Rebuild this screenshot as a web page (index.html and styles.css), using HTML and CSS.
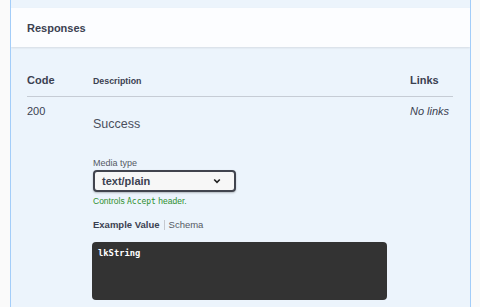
FILE: index.html
```html
<!DOCTYPE html>
<html>
<head>
<meta charset="utf-8">
<link rel="stylesheet" href="styles.css">
</head>
<body>
<div class="page">
  <div class="opblock">
    <div class="section-header"><h4>Responses</h4></div>
    <div class="responses-inner">
      <div class="table">
        <div class="th th-code">Code</div>
        <div class="th th-desc">Description</div>
        <div class="th th-links">Links</div>

        <div class="td td-code">200</div>
        <div class="td td-desc">
          <p class="markdown">Success</p>
          <div class="media">
            <div class="media-label">Media type</div>
            <div class="select">
              <span class="select-text">text/plain</span>
              <svg class="chev" width="8" height="6" viewBox="0 0 8 6"><polyline points="1.2,1.5 4,4.3 6.8,1.5" fill="none" stroke="#222" stroke-width="1.6"/></svg>
            </div>
            <div class="accept">Controls <code>Accept</code> header.</div>
          </div>
          <div class="tabs">
            <span class="tab active">Example Value</span><span class="tab sep">Schema</span>
          </div>
          <pre class="example">lkString</pre>
        </div>
        <div class="td td-links">No links</div>
      </div>
    </div>
  </div>
</div>
</body>
</html>
```
FILE: styles.css
```css
html, body {
  margin: 0;
  padding: 0;
  background: #fafafa;
  height: 307px;
  overflow: hidden;
}
body {
  font-family: "Liberation Sans", Arial, sans-serif;
  color: #3b4151;
}
.page {
  padding: 0 9px 0 10px;
}
.opblock {
  border-left: 1px solid #a3cdf9;
  border-right: 1px solid #a3cdf9;
  background: #ecf4fc;
  padding-top: 8px;
  height: 299px;
  overflow: hidden;
}
.section-header {
  height: 39px;
  display: flex;
  align-items: center;
  padding: 0 16px;
  background: rgba(255,255,255,0.82);
  box-shadow: 0 1px 2px rgba(0,0,0,0.1);
}
.section-header h4 {
  margin: 0;
  font-size: 11px;
  font-weight: 700;
  color: #3b4151;
}
.responses-inner {
  padding: 17px 17px 0 16px;
}
.table {
  display: grid;
  grid-template-columns: 66px 1fr 43px;
}
.th {
  padding: 8px 0;
  line-height: 16px;
  font-weight: 700;
  border-bottom: 1px solid #c6ccd5;
  align-self: end;
}
.th-code, .th-links {
  font-size: 11px;
}
.th-desc {
  font-size: 8.8px;
  line-height: 14px;
  padding-bottom: 8.5px;
}
.td {
  padding-top: 6px;
}
.td-code {
  font-size: 11px;
  line-height: 16px;
}
.td-links {
  font-size: 11px;
  line-height: 16px;
  font-style: italic;
  color: #3b4151;
}
.markdown {
  margin: 12px 0 0;
  font-size: 12.5px;
  line-height: 18px;
  color: #4a4f5c;
}
.media {
  margin-top: 24px;
}
.media-label {
  font-size: 9px;
  line-height: 12px;
  color: #555a64;
}
.select {
  margin-top: 1px;
  width: 143px;
  height: 22px;
  box-sizing: border-box;
  border: 2px solid #41444e;
  border-radius: 4px;
  background: #f7f7f7;
  box-shadow: 0 1px 2px rgba(0,0,0,0.25);
  display: flex;
  align-items: center;
  justify-content: space-between;
  padding: 0 13px 0 7px;
}
.select-text {
  font-size: 11px;
  font-weight: 700;
  color: #3b4151;
}
.chev {
  display: block;
}
.accept {
  margin-top: 4px;
  font-size: 8.5px;
  line-height: 11px;
  color: #2f8f2f;
}
.accept code {
  font-family: "DejaVu Sans Mono", "Liberation Mono", monospace;
  font-size: 8px;
}
.tabs {
  margin-top: 11px;
  display: flex;
  align-items: center;
  font-size: 9.5px;
  line-height: 14px;
}
.tab.active {
  font-weight: 700;
  color: #3b4151;
  padding-right: 4px;
}
.tab.sep {
  color: #555a64;
  border-left: 1px solid #c5c9d0;
  padding-left: 4px;
  line-height: 10px;
}
.example {
  margin: 10px 0 0 -1px;
  width: 295px;
  height: 58px;
  box-sizing: border-box;
  background: #333;
  border-radius: 4px;
  padding: 5px 6px;
  color: #fff;
  font-family: "DejaVu Sans Mono", "Liberation Mono", monospace;
  font-weight: 700;
  font-size: 8.8px;
  line-height: 12px;
}
```
